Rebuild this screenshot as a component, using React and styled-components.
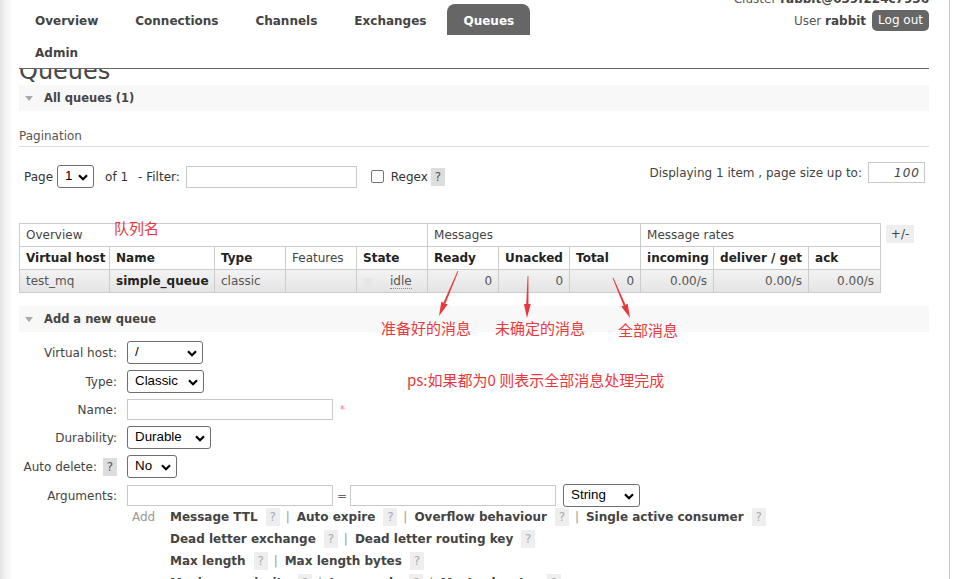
import React from 'react'
import styled, { createGlobalStyle } from 'styled-components'

const GlobalStyle = createGlobalStyle`
  html, body { margin: 0; padding: 0; }
  body {
    font-family: "DejaVu Sans", Verdana, sans-serif;
    font-size: 12px;
    color: #484848;
    height: 579px;
    overflow: hidden;
    background:
      linear-gradient(to right, transparent 949px, #c4c4c4 949px, #c4c4c4 950px, transparent 950px),
      linear-gradient(to right, #e2e2e2 0, #f2f2f2 5px, #fff 14px);
  }
`

const Page = styled.div`
  position: relative;
  width: 910px;
  padding-left: 19px;
  height: 579px;
  overflow: hidden;
`

/* ---------- header ---------- */
const Header = styled.header`
  position: relative;
  z-index: 2;
  background: #fff;
  display: flex;
  justify-content: space-between;
  align-items: flex-start;
  padding-top: 4px;
  height: 64px;
  border-bottom: 1px solid #666;
`

const Nav = styled.ul`
  list-style: none;
  margin: 0;
  padding: 0;
  display: flex;
  flex-wrap: wrap;
  width: 560px;
`

const NavItem = styled.li`
  height: 29px;
  line-height: 31px;
  padding: 2px 16px 0;
  margin: 0 5px 1px 0;
  font-weight: bold;
  color: ${p => (p.$active ? '#fff' : '#444')};
  background: ${p => (p.$active ? '#666' : 'transparent')};
  border-radius: 8px 8px 0 0;
  overflow: hidden;
`

const UserBox = styled.div`
  margin-top: -14px;
  text-align: right;
  color: #555;
  b { color: #444; }
`

const ClusterLine = styled.div`
  line-height: 18px;
`

const UserLine = styled.div`
  display: flex;
  align-items: center;
  justify-content: flex-end;
  gap: 6px;
  margin-top: 2px;
  height: 21px;
`

const LogoutButton = styled.span`
  display: inline-block;
  height: 21px;
  line-height: 21px;
  padding: 0 6px;
  border-radius: 5px;
  background: #666;
  color: #fff;
`

const Title = styled.h1`
  margin: -12px 0 0;
  font-size: 24px;
  line-height: 28px;
  font-weight: normal;
  color: #484848;
`

/* ---------- sections ---------- */
const SectionBar = styled.div`
  display: flex;
  align-items: center;
  gap: 11px;
  height: 26px;
  margin-top: ${p => p.$mt || 0}px;
  padding-left: 6px;
  background: #f8f8f8;
  font-weight: bold;
  font-size: 11.5px;
  color: #444;
`

const Triangle = styled.span`
  width: 0;
  height: 0;
  border-left: 4.5px solid transparent;
  border-right: 4.5px solid transparent;
  border-top: 5px solid #aaa;
`

const SubHeading = styled.h3`
  margin: 18px 0 0;
  padding-bottom: 2px;
  font-size: 12px;
  line-height: 15px;
  font-weight: normal;
  color: #555;
  border-bottom: 1px solid #ddd;
`

const PagerRow = styled.div`
  display: flex;
  justify-content: space-between;
  align-items: flex-start;
  margin-top: 15px;
  padding-right: 4px;
`

const PagerLeft = styled.div`
  display: flex;
  align-items: center;
  margin-top: 3px;
  padding-left: 5px;
  color: #333;
`

const PagerRight = styled.div`
  display: flex;
  align-items: center;
  gap: 6px;
  color: #444;
`

const Spaced = styled.span`
  margin-left: ${p => p.$ml || 0}px;
`

const TextInput = styled.input`
  box-sizing: border-box;
  width: ${p => p.$w}px;
  height: ${p => p.$h || 21}px;
  margin: 0 0 0 ${p => p.$ml || 0}px;
  border: 1px solid #c8c8c8;
  padding: 0 4px;
  font-family: "DejaVu Sans", sans-serif;
  font-size: 12px;
  background: #fff;
`

const SizeInput = styled(TextInput)`
  text-align: right;
  font-style: italic;
  letter-spacing: 1px;
  color: #444;
`

const Check = styled.input`
  appearance: none;
  box-sizing: border-box;
  width: 13px;
  height: 13px;
  margin: 0 0 0 14px;
  border: 1px solid #767676;
  border-radius: 2px;
  background: #fff;
`

const Help = styled.span`
  display: inline-block;
  width: 14px;
  height: 18px;
  line-height: 18px;
  text-align: center;
  margin-left: ${p => p.$ml || 0}px;
  background: ${p => (p.$soft ? '#eee' : '#ddd')};
  color: ${p => (p.$soft ? '#aaa' : '#555')};
  font-weight: normal;
  font-size: 12px;
`

/* ---------- select ---------- */
const SelectWrap = styled.span`
  position: relative;
  display: inline-flex;
  width: ${p => p.$w}px;
  height: 23px;
  margin-left: ${p => p.$ml || 0}px;
`

const SelectBox = styled.select`
  appearance: none;
  box-sizing: border-box;
  width: 100%;
  height: 100%;
  margin: 0;
  padding: 0 0 2px 7px;
  border: 1px solid #6e6e6e;
  border-radius: 3px;
  background: #fff;
  font-family: "Liberation Sans", Arial, sans-serif;
  font-size: 13.33px;
  color: #000;
`

const Chevron = styled.svg`
  position: absolute;
  right: 6px;
  top: 9px;
  pointer-events: none;
`

const Select = ({ w, ml, value }) => (
  <SelectWrap $w={w} $ml={ml}>
    <SelectBox defaultValue={value}>
      <option>{value}</option>
    </SelectBox>
    <Chevron width="10" height="7" viewBox="0 0 10 7">
      <path d="M1 1.2l4 4 4-4" fill="none" stroke="#000" strokeWidth="2.2" />
    </Chevron>
  </SelectWrap>
)

/* ---------- table ---------- */
const TableRow = styled.div`
  display: flex;
  align-items: flex-start;
  gap: 5px;
  margin-top: 35px;
`

const Table = styled.table`
  table-layout: fixed;
  border-collapse: collapse;
  width: 861px;
  font-size: 12px;
`

const Col = styled.col`
  width: ${p => p.$w}px;
`

const Cell = styled.td`
  height: 22px;
  padding: 0 6px;
  border: 1px solid #ccc;
  white-space: nowrap;
  overflow: hidden;
  text-align: ${p => (p.$num ? 'right' : 'left')};
`

const GroupTh = styled(Cell).attrs({ as: 'th' })`
  font-weight: normal;
  color: #444;
  background: #fff;
`

const ColTh = styled(Cell).attrs({ as: 'th' })`
  font-weight: ${p => (p.$plain ? 'normal' : 'bold')};
  color: ${p => (p.$plain ? '#444' : '#222')};
  background: #fff;
`

const DataRow = styled.tr`
  background: linear-gradient(#f3f3f3, #e3e3e3);
  color: #555;
`

const StrongCell = styled(Cell)`
  font-weight: bold;
  color: #222;
`

const StateDot = styled.span`
  display: inline-block;
  width: 8px;
  height: 8px;
  margin: 0 18px 0 1px;
  background: #e6e6e6;
  vertical-align: middle;
`

const Idle = styled.abbr`
  text-decoration: none;
  border-bottom: 1px dotted #888;
`

const ToggleCols = styled.span`
  display: inline-block;
  margin-top: 2px;
  width: 28px;
  height: 18px;
  line-height: 18px;
  text-align: center;
  background: #eee;
  color: #444;
`

/* ---------- form ---------- */
const Form = styled.div`
  display: grid;
  grid-template-columns: 98px auto;
  column-gap: 10px;
  row-gap: 6px;
  align-items: center;
  margin-top: 9px;
`

const Label = styled.label`
  display: flex;
  align-items: center;
  justify-content: flex-end;
  gap: 6px;
  color: #444;
  min-height: ${p => p.$h || 23}px;
`

const Field = styled.div`
  display: flex;
  align-items: center;
  min-height: ${p => p.$h || 23}px;
`

const Required = styled.span`
  margin-left: 7px;
  color: #f08080;
  font-size: 10px;
`

const Equals = styled.span`
  margin: 0 3px 0 4px;
  color: #666;
`

const ArgsBlock = styled.div`
  grid-column: 2;
  display: grid;
  grid-template-columns: 38px auto;
  margin-top: -5px;
  padding-left: 5px;
`

const AddLabel = styled.span`
  color: #999;
  line-height: 18px;
`

const ArgLines = styled.div`
  display: flex;
  flex-direction: column;
`

const ArgLine = styled.div`
  display: flex;
  align-items: center;
  height: 22px;
  margin-top: ${p => (p.$first ? -2 : 0)}px;
`

const ArgLink = styled.span`
  font-weight: bold;
  color: #444;
`

const Sep = styled.span`
  margin: 0 7px 0 6px;
  color: #999;
`

/* ---------- annotations (drawn over the screenshot) ---------- */
const Overlay = styled.svg`
  position: absolute;
  left: 0;
  top: 0;
  z-index: 3;
  pointer-events: none;
`

const Note = styled.span`
  position: absolute;
  z-index: 3;
  left: ${p => p.$x}px;
  top: ${p => p.$y}px;
  color: #e8383d;
  font-family: "Noto Sans CJK SC", "DejaVu Sans", sans-serif;
  font-size: 15px;
  line-height: 20px;
  white-space: nowrap;
`

const RED = '#e8383d'

const Arrow = ({ x1, y1, x2, y2 }) => {
  const dx = x2 - x1
  const dy = y2 - y1
  const len = Math.hypot(dx, dy)
  const ux = dx / len
  const uy = dy / len
  const px = -uy
  const py = ux
  const hl = 14
  const hw = 3.4
  const bx = x2 - ux * hl
  const by = y2 - uy * hl
  const shaft = `${x1 + px * 0.4},${y1 + py * 0.4} ${x1 - px * 0.4},${y1 - py * 0.4} ${bx - px * 1.1},${by - py * 1.1} ${bx + px * 1.1},${by + py * 1.1}`
  const head = `${x2},${y2} ${bx + px * hw},${by + py * hw} ${bx - px * hw},${by - py * hw}`
  return (
    <g fill={RED}>
      <polygon points={shaft} />
      <polygon points={head} />
    </g>
  )
}

const navItems = ['Overview', 'Connections', 'Channels', 'Exchanges', 'Queues', 'Admin']
const colWidths = [90, 105, 71, 71, 71, 71, 71, 71, 73, 95, 72]
const colHeads = ['Virtual host', 'Name', 'Type', 'Features', 'State', 'Ready', 'Unacked', 'Total', 'incoming', 'deliver / get', 'ack']

const argLines = [
  ['Message TTL', 'Auto expire', 'Overflow behaviour', 'Single active consumer'],
  ['Dead letter exchange', 'Dead letter routing key'],
  ['Max length', 'Max length bytes'],
  ['Maximum priority', 'Lazy mode', 'Master locator'],
]

export default function App() {
  return (
    <Page>
      <GlobalStyle />
      <Header>
        <Nav>
          {navItems.map(item => (
            <NavItem key={item} $active={item === 'Queues'}>{item}</NavItem>
          ))}
        </Nav>
        <UserBox>
          <ClusterLine>Cluster <b>rabbit@039f224c7936</b></ClusterLine>
          <UserLine>
            <span>User <b>rabbit</b></span>
            <LogoutButton>Log out</LogoutButton>
          </UserLine>
        </UserBox>
      </Header>

      <Title>Queues</Title>

      <SectionBar>
        <Triangle />
        All queues (1)
      </SectionBar>

      <SubHeading>Pagination</SubHeading>
      <PagerRow>
        <PagerLeft>
          <span>Page</span>
          <Select w={37} ml={4} value="1" />
          <Spaced $ml={11}>of 1</Spaced>
          <Spaced $ml={10}>- Filter:</Spaced>
          <TextInput $w={171} $h={22} $ml={6} />
          <Check type="checkbox" />
          <Spaced $ml={7}>Regex</Spaced>
          <Help $ml={3}>?</Help>
        </PagerLeft>
        <PagerRight>
          <span>Displaying 1 item , page size up to:</span>
          <SizeInput $w={57} defaultValue="100" />
        </PagerRight>
      </PagerRow>

      <TableRow>
        <Table>
          <colgroup>
            {colWidths.map((w, i) => <Col key={i} $w={w} />)}
          </colgroup>
          <thead>
            <tr>
              <GroupTh colSpan={5}>Overview</GroupTh>
              <GroupTh colSpan={3}>Messages</GroupTh>
              <GroupTh colSpan={3}>Message rates</GroupTh>
            </tr>
            <tr>
              {colHeads.map(h => (
                <ColTh key={h} $plain={h === 'Features'}>{h}</ColTh>
              ))}
            </tr>
          </thead>
          <tbody>
            <DataRow>
              <Cell>test_mq</Cell>
              <StrongCell>simple_queue</StrongCell>
              <Cell>classic</Cell>
              <Cell />
              <Cell><StateDot /><Idle title="idle">idle</Idle></Cell>
              <Cell $num>0</Cell>
              <Cell $num>0</Cell>
              <Cell $num>0</Cell>
              <Cell $num>0.00/s</Cell>
              <Cell $num>0.00/s</Cell>
              <Cell $num>0.00/s</Cell>
            </DataRow>
          </tbody>
        </Table>
        <ToggleCols>+/-</ToggleCols>
      </TableRow>

      <SectionBar $mt={13}>
        <Triangle />
        Add a new queue
      </SectionBar>

      <Form>
        <Label>Virtual host:</Label>
        <Field><Select w={76} value="/" /></Field>

        <Label>Type:</Label>
        <Field><Select w={77} value="Classic" /></Field>

        <Label $h={21}>Name:</Label>
        <Field $h={21}>
          <TextInput $w={206} $h={21} />
          <Required>*</Required>
        </Field>

        <Label>Durability:</Label>
        <Field><Select w={84} value="Durable" /></Field>

        <Label>Auto delete: <Help>?</Help></Label>
        <Field><Select w={50} value="No" /></Field>

        <Label>Arguments:</Label>
        <Field>
          <TextInput $w={206} />
          <Equals>=</Equals>
          <TextInput $w={206} />
          <Select w={77} ml={7} value="String" />
        </Field>

        <ArgsBlock>
          <AddLabel>Add</AddLabel>
          <ArgLines>
            {argLines.map((line, i) => (
              <ArgLine key={i} $first={i === 0}>
                {line.map((name, j) => (
                  <React.Fragment key={name}>
                    <ArgLink>{name}</ArgLink>
                    <Help $soft $ml={8}>?</Help>
                    {j < line.length - 1 && <Sep>|</Sep>}
                  </React.Fragment>
                ))}
              </ArgLine>
            ))}
          </ArgLines>
        </ArgsBlock>
      </Form>

      <Overlay width="954" height="579" viewBox="0 0 954 579">
        <Arrow x1={458} y1={271} x2={439} y2={316} />
        <Arrow x1={528} y1={276} x2={527} y2={318} />
        <Arrow x1={613} y1={278} x2={630} y2={318} />
      </Overlay>
      <Note $x={114} $y={218}>队列名</Note>
      <Note $x={381} $y={318}>准备好的消息</Note>
      <Note $x={495} $y={318}>未确定的消息</Note>
      <Note $x={618} $y={320}>全部消息</Note>
      <Note $x={407} $y={370}>ps:如果都为0 则表示全部消息处理完成</Note>
    </Page>
  )
}
